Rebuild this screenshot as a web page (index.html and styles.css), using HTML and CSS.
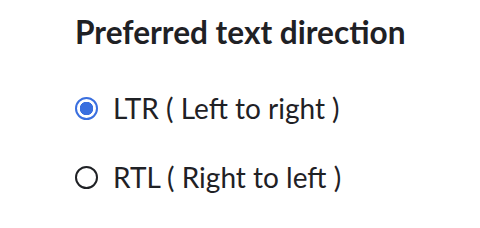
FILE: index.html
```html
<!DOCTYPE html>
<html lang="en">
<head>
    <meta charset="UTF-8">
    <title>Text direction</title>
    <link rel="stylesheet" href="styles.css">
</head>
<body>
    <div class="panel">
        <h2 class="panel-title">Preferred text direction</h2>
        <div class="options">
            <label class="option">
                <input type="radio" name="dir" value="ltr" checked>
                <span>LTR ( Left to right )</span>
            </label>
            <label class="option">
                <input type="radio" name="dir" value="rtl">
                <span>RTL ( Right to left )</span>
            </label>
        </div>
    </div>
</body>
</html>
```

FILE: styles.css
```css
body {
    margin: 0;
    background: #fff;
    font-family: 'Lato', 'Noto Sans', sans-serif;
    color: #1f2125;
}

.panel {
    padding: 12px 0 0 75px;
}

.panel-title {
    font-size: 31.6px;
    font-weight: 700;
    margin: 0 0 38px;
    line-height: 40px;
}

.options {
    display: flex;
    flex-direction: column;
    gap: 33px;
}

.option {
    display: flex;
    align-items: center;
    gap: 15px;
    font-size: 28px;
    line-height: 36px;
    cursor: pointer;
}

.option input {
    appearance: none;
    margin: 0;
    width: 23px;
    height: 23px;
    border: 2px solid #1f2125;
    border-radius: 50%;
    box-sizing: border-box;
}

.option input:checked {
    border-color: #3a6fdf;
    background: radial-gradient(circle, #3a6fdf 0 6.5px, #fff 7px);
}
```
